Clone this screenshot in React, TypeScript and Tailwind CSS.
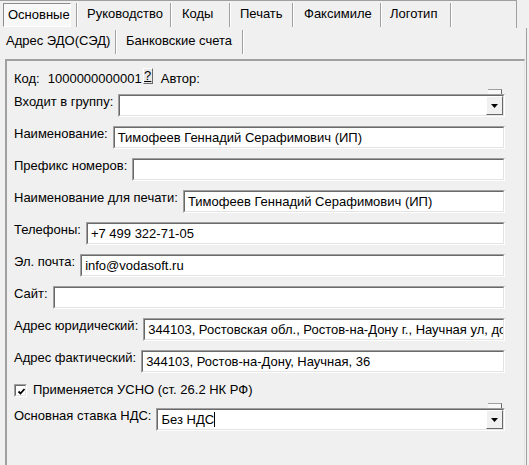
import React from "react";

function Sep({ h = "h-[24px]" }: { h?: string }) {
  return (
    <div className={`flex ${h}`}>
      <div className="w-px bg-[#a0a0a0]" />
      <div className="w-px bg-white" />
    </div>
  );
}

function Tab({ label, w, pl }: { label: string; w: string; pl: string }) {
  return <div className={`${w} ${pl} leading-4 pt-[3px] whitespace-nowrap`}>{label}</div>;
}

function Sunken({ className = "", children }: { className?: string; children?: React.ReactNode }) {
  return (
    <div className={`border-t border-l border-t-[#a0a0a0] border-l-[#a0a0a0] border-b border-r border-b-white border-r-white ${className}`}>
      <div className="h-full border-t border-l border-t-[#696969] border-l-[#696969] border-b border-r border-b-[#e3e3e3] border-r-[#e3e3e3] bg-white relative">
        {children}
      </div>
    </div>
  );
}

function Field({ label, value, combo, caret }: { label: string; value?: string; combo?: boolean; caret?: boolean }) {
  return (
    <div className="flex items-start gap-[5px] h-[23px] pr-[19px]">
      <div className="leading-4 whitespace-nowrap">{label}</div>
      <Sunken className="flex-1 h-[23px] min-w-0">
        <div className="pl-[3px] pt-[2px] leading-4 whitespace-nowrap overflow-hidden h-full">
          {value}
          {caret && <span className="inline-block w-px h-[15px] bg-black align-[-3px]" />}
        </div>
        {combo && (
          <>
            <div className="absolute right-[1px] -top-[7px] w-[14px] h-[5px] border-t border-r border-t-[#a0a0a0] border-r-[#696969] bg-[#f8f8f8]" />
            <div className="absolute right-0 top-0 bottom-0 w-[17px] border-t border-l border-t-white border-l-white border-b border-r border-b-[#696969] border-r-[#696969] bg-[#f0f0f0] flex items-center justify-center">
              <svg width="7" height="4" viewBox="0 0 7 4">
                <path d="M0 0h7L3.5 4z" fill="#000" />
              </svg>
            </div>
          </>
        )}
      </Sunken>
    </div>
  );
}

export default function App() {
  return (
    <div className="w-[529px] h-[465px] overflow-hidden bg-[#f0f0f0] text-[13px] text-black font-['Liberation_Sans',Arial,sans-serif] relative">
      {/* tab strip */}
      <div className="w-[517px] h-[28px] border-t border-r border-[#a0a0a0] flex items-start pt-[2px]">
        <div className="w-[3px]" />
        <div className="w-[68px] h-[24px] border-t border-l border-t-[#8c8c8c] border-l-[#8c8c8c] border-b border-r border-b-white border-r-white bg-[#f8f8f8] pl-[4px] pt-[3px] leading-4">
          Основные
        </div>
        <div className="w-[5px]" />
        <Sep />
        <Tab label="Руководство" w="w-[92px]" pl="pl-[9px]" />
        <Sep />
        <Tab label="Коды" w="w-[57px]" pl="pl-[10px]" />
        <Sep />
        <Tab label="Печать" w="w-[61px]" pl="pl-[9px]" />
        <Sep />
        <Tab label="Факсимиле" w="w-[86px]" pl="pl-[10px]" />
        <Sep />
        <Tab label="Логотип" w="w-[68px]" pl="pl-[8px]" />
        <Sep />
      </div>
      <div className="flex items-start h-[27px] pt-[2px]">
        <Tab label="Адрес ЭДО(СЭД)" w="w-[115px]" pl="pl-[6px]" />
        <Sep />
        <Tab label="Банковские счета" w="w-[125px]" pl="pl-[9px]" />
        <Sep />
      </div>

      {/* page */}
      <div className="ml-[5px] mt-[4px] w-[520px] h-[420px] border-t-2 border-l-2 border-t-[#a0a0a0] border-l-[#a0a0a0] border-r border-r-[#e3e3e3]">
        <div className="pl-[7px] pt-[10px] flex flex-col">
          <div className="flex items-start h-4 leading-4 whitespace-nowrap">
            <span>Код:</span>
            <span className="ml-[8px]">1000000000001</span>
            <span className="ml-[1px] -mt-[3px] w-[10px] h-[16px] border-t border-l border-t-white border-l-white border-b border-r border-b-[#696969] border-r-[#696969] bg-[#e8e8e8] flex items-center justify-center text-[13px] leading-3 underline">
              ?
            </span>
            <span className="ml-[8px]">Автор:</span>
          </div>
          <div className="mt-[7px] flex flex-col gap-[9px]">
            <Field label="Входит в группу:" combo />
            <Field label="Наименование:" value="Тимофеев Геннадий Серафимович (ИП)" />
            <Field label="Префикс номеров:" />
            <Field label="Наименование для печати:" value="Тимофеев Геннадий Серафимович (ИП)" />
            <Field label="Телефоны:" value="+7 499 322-71-05" />
            <Field label="Эл. почта:" value="info@vodasoft.ru" />
            <Field label="Сайт:" />
            <Field label="Адрес юридический:" value="344103, Ростовская обл., Ростов-на-Дону г., Научная ул, дом 36" />
            <Field label="Адрес фактический:" value="344103, Ростов-на-Дону, Научная, 36" />
          </div>
          <label className="mt-[9px] flex items-center h-4 leading-4 gap-[6px]">
            <Sunken className="w-[13px] h-[13px]">
              <svg width="9" height="9" viewBox="0 0 9 9" className="absolute left-[1px] top-[1px]">
                <path d="M1.5 4.5l2 2 4-4.5" fill="none" stroke="#000" strokeWidth="1.8" />
              </svg>
            </Sunken>
            <span>Применяется УСНО (ст. 26.2 НК РФ)</span>
          </label>
          <div className="mt-[10px]">
            <Field label="Основная ставка НДС:" value="Без НДС" combo caret />
          </div>
        </div>
      </div>
      <div className="absolute right-[2px] top-[28px] bottom-0 w-px bg-[#a0a0a0]" />
    </div>
  );
}
